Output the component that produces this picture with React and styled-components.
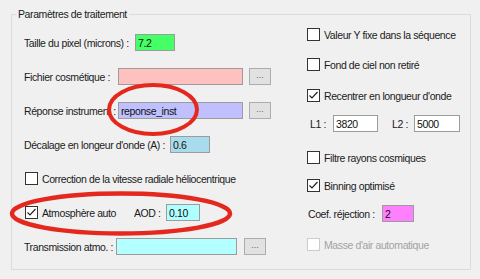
import React from 'react';
import styled, { createGlobalStyle } from 'styled-components';

const GlobalStyle = createGlobalStyle`
  html, body {
    margin: 0;
    background: #f0f0f0;
  }
  body {
    font-family: "Liberation Sans", Arial, sans-serif;
    font-size: 10.5px;
    letter-spacing: -0.4px;
    color: #1b1b1b;
  }
`;

const Page = styled.div`
  position: relative;
  width: 480px;
  height: 279px;
  box-sizing: border-box;
  padding: 7px 9px 0 11px;
  overflow: hidden;
`;

const GroupBox = styled.fieldset`
  margin: 0;
  padding: 5px 0 0 12px;
  width: 460px;
  height: 263px;
  min-width: 0;
  box-sizing: border-box;
  border: 1px solid #dcdcdc;
`;

const Legend = styled.legend`
  padding: 0 2px;
  margin-left: -8px;
  line-height: 14px;
`;

const Columns = styled.div`
  display: grid;
  grid-template-columns: 283px 1fr;
`;

const LeftCol = styled.div`
  display: flex;
  flex-direction: column;
  gap: 17px;
  padding-top: 8px;
`;

const RightCol = styled.div`
  display: flex;
  flex-direction: column;
`;

const Row = styled.div`
  display: flex;
  align-items: center;
  height: 17px;
  margin-top: ${(p) => p.$mt || 0}px;
  padding-left: ${(p) => p.$pl || 0}px;
`;

const Label = styled.span`
  flex: none;
  width: ${(p) => p.$w}px;
  margin-left: ${(p) => p.$ml || 0}px;
  white-space: nowrap;
  overflow: hidden;
`;

const TextBox = styled.input`
  flex: none;
  width: ${(p) => p.$w}px;
  height: 17px;
  box-sizing: border-box;
  margin: 0;
  padding: 0 2px;
  border: 1px solid #9c9c9c;
  background: ${(p) => p.$bg || '#fff'};
  font: inherit;
  letter-spacing: inherit;
  color: #111;
  outline: none;
`;

const BrowseButton = styled.button`
  flex: none;
  width: 22px;
  height: 17px;
  margin: 0 0 0 ${(p) => p.$ml}px;
  padding: 0 0 3px;
  border: 1px solid #adadad;
  background: #e1e1e1;
  font-family: inherit;
  font-size: 9px;
  letter-spacing: 0;
  color: #666;
  line-height: 10px;
`;

const CheckRow = styled.div`
  display: flex;
  align-items: center;
  height: 17px;
  margin-top: ${(p) => p.$mt || 0}px;
  color: ${(p) => (p.$disabled ? '#a3a3a3' : 'inherit')};
`;

const Box = styled.span`
  flex: none;
  display: flex;
  align-items: center;
  justify-content: center;
  width: 13px;
  height: 13px;
  box-sizing: border-box;
  margin-left: ${(p) => p.$ml || 0}px;
  margin-right: 4px;
  border: 1px solid ${(p) => (p.$disabled ? '#cccccc' : '#333')};
  background: #fff;
`;

const CheckText = styled.span`
  flex: none;
  width: ${(p) => (p.$w ? `${p.$w}px` : 'auto')};
  white-space: nowrap;
`;

const Overlay = styled.svg`
  position: absolute;
  left: 0;
  top: 0;
  pointer-events: none;
`;

const Check = ({ checked, disabled, ml, w, children, mt }) => (
  <CheckRow $mt={mt} $disabled={disabled}>
    <Box $ml={ml} $disabled={disabled}>
      {checked && (
        <svg width="11" height="11" viewBox="0 0 11 11">
          <polyline points="1.5,5.5 4,8 9.5,2" fill="none" stroke="#222" strokeWidth="1.2" />
        </svg>
      )}
    </Box>
    <CheckText $w={w}>{children}</CheckText>
  </CheckRow>
);

const Field = ({ label, lw, value, w, bg }) => (
  <>
    <Label $w={lw}>{label}</Label>
    <TextBox $w={w} $bg={bg} value={value} readOnly />
  </>
);

export default function App() {
  return (
    <Page>
      <GlobalStyle />
      <GroupBox>
        <Legend>Paramètres de traitement</Legend>
        <Columns>
          <LeftCol>
            <Row>
              <Field label="Taille du pixel (microns) :" lw={111} value="7.2" w={40} bg="#44ff66" />
            </Row>
            <Row>
              <Field label="Fichier cosmétique :" lw={94} value="" w={125} bg="#ffc0c0" />
              <BrowseButton $ml={6}>...</BrowseButton>
            </Row>
            <Row>
              <Field label="Réponse instrument :" lw={94} value="reponse_inst" w={125} bg="#c0c0ff" />
              <BrowseButton $ml={6}>...</BrowseButton>
            </Row>
            <Row>
              <Field label="Décalage en longeur d'onde (A) :" lw={146} value="0.6" w={40} bg="#a8dcec" />
            </Row>
            <Check ml={1}>Correction de la vitesse radiale héliocentrique</Check>
            <Row>
              <Check ml={1} checked w={92}>Atmosphère auto</Check>
              <Field label="AOD :" lw={32} value="0.10" w={34} bg="#b0ffff" />
            </Row>
            <Row>
              <Field label="Transmission atmo. :" lw={92} value="" w={121} bg="#b4ffff" />
              <BrowseButton $ml={7}>...</BrowseButton>
            </Row>
          </LeftCol>
          <RightCol>
            <Check>Valeur Y fixe dans la séquence</Check>
            <Check mt={13}>Fond de ciel non retiré</Check>
            <Check mt={14} checked>Recentrer en longueur d'onde</Check>
            <Row $mt={11} $pl={3}>
              <Field label="L1 :" lw={23} value="3820" w={45} />
              <Label $w={22} $ml={14}>L2 :</Label>
              <TextBox $w={46} value="5000" readOnly />
            </Row>
            <Check mt={17}>Filtre rayons cosmiques</Check>
            <Check mt={11} checked>Binning optimisé</Check>
            <Row $mt={11} $pl={1}>
              <Field label="Coef. réjection :" lw={74} value="2" w={32} bg="#ff80ff" />
            </Row>
            <Check mt={14} disabled>Masse d'air automatique</Check>
          </RightCol>
        </Columns>
      </GroupBox>
      <Overlay width="480" height="279" viewBox="0 0 480 279">
        <ellipse cx="153" cy="109.5" rx="44" ry="24.5" fill="none" stroke="#e5281d" strokeWidth="4" />
        <ellipse cx="121" cy="213.5" rx="109" ry="20" fill="none" stroke="#e5281d" strokeWidth="4.5" />
      </Overlay>
    </Page>
  );
}
